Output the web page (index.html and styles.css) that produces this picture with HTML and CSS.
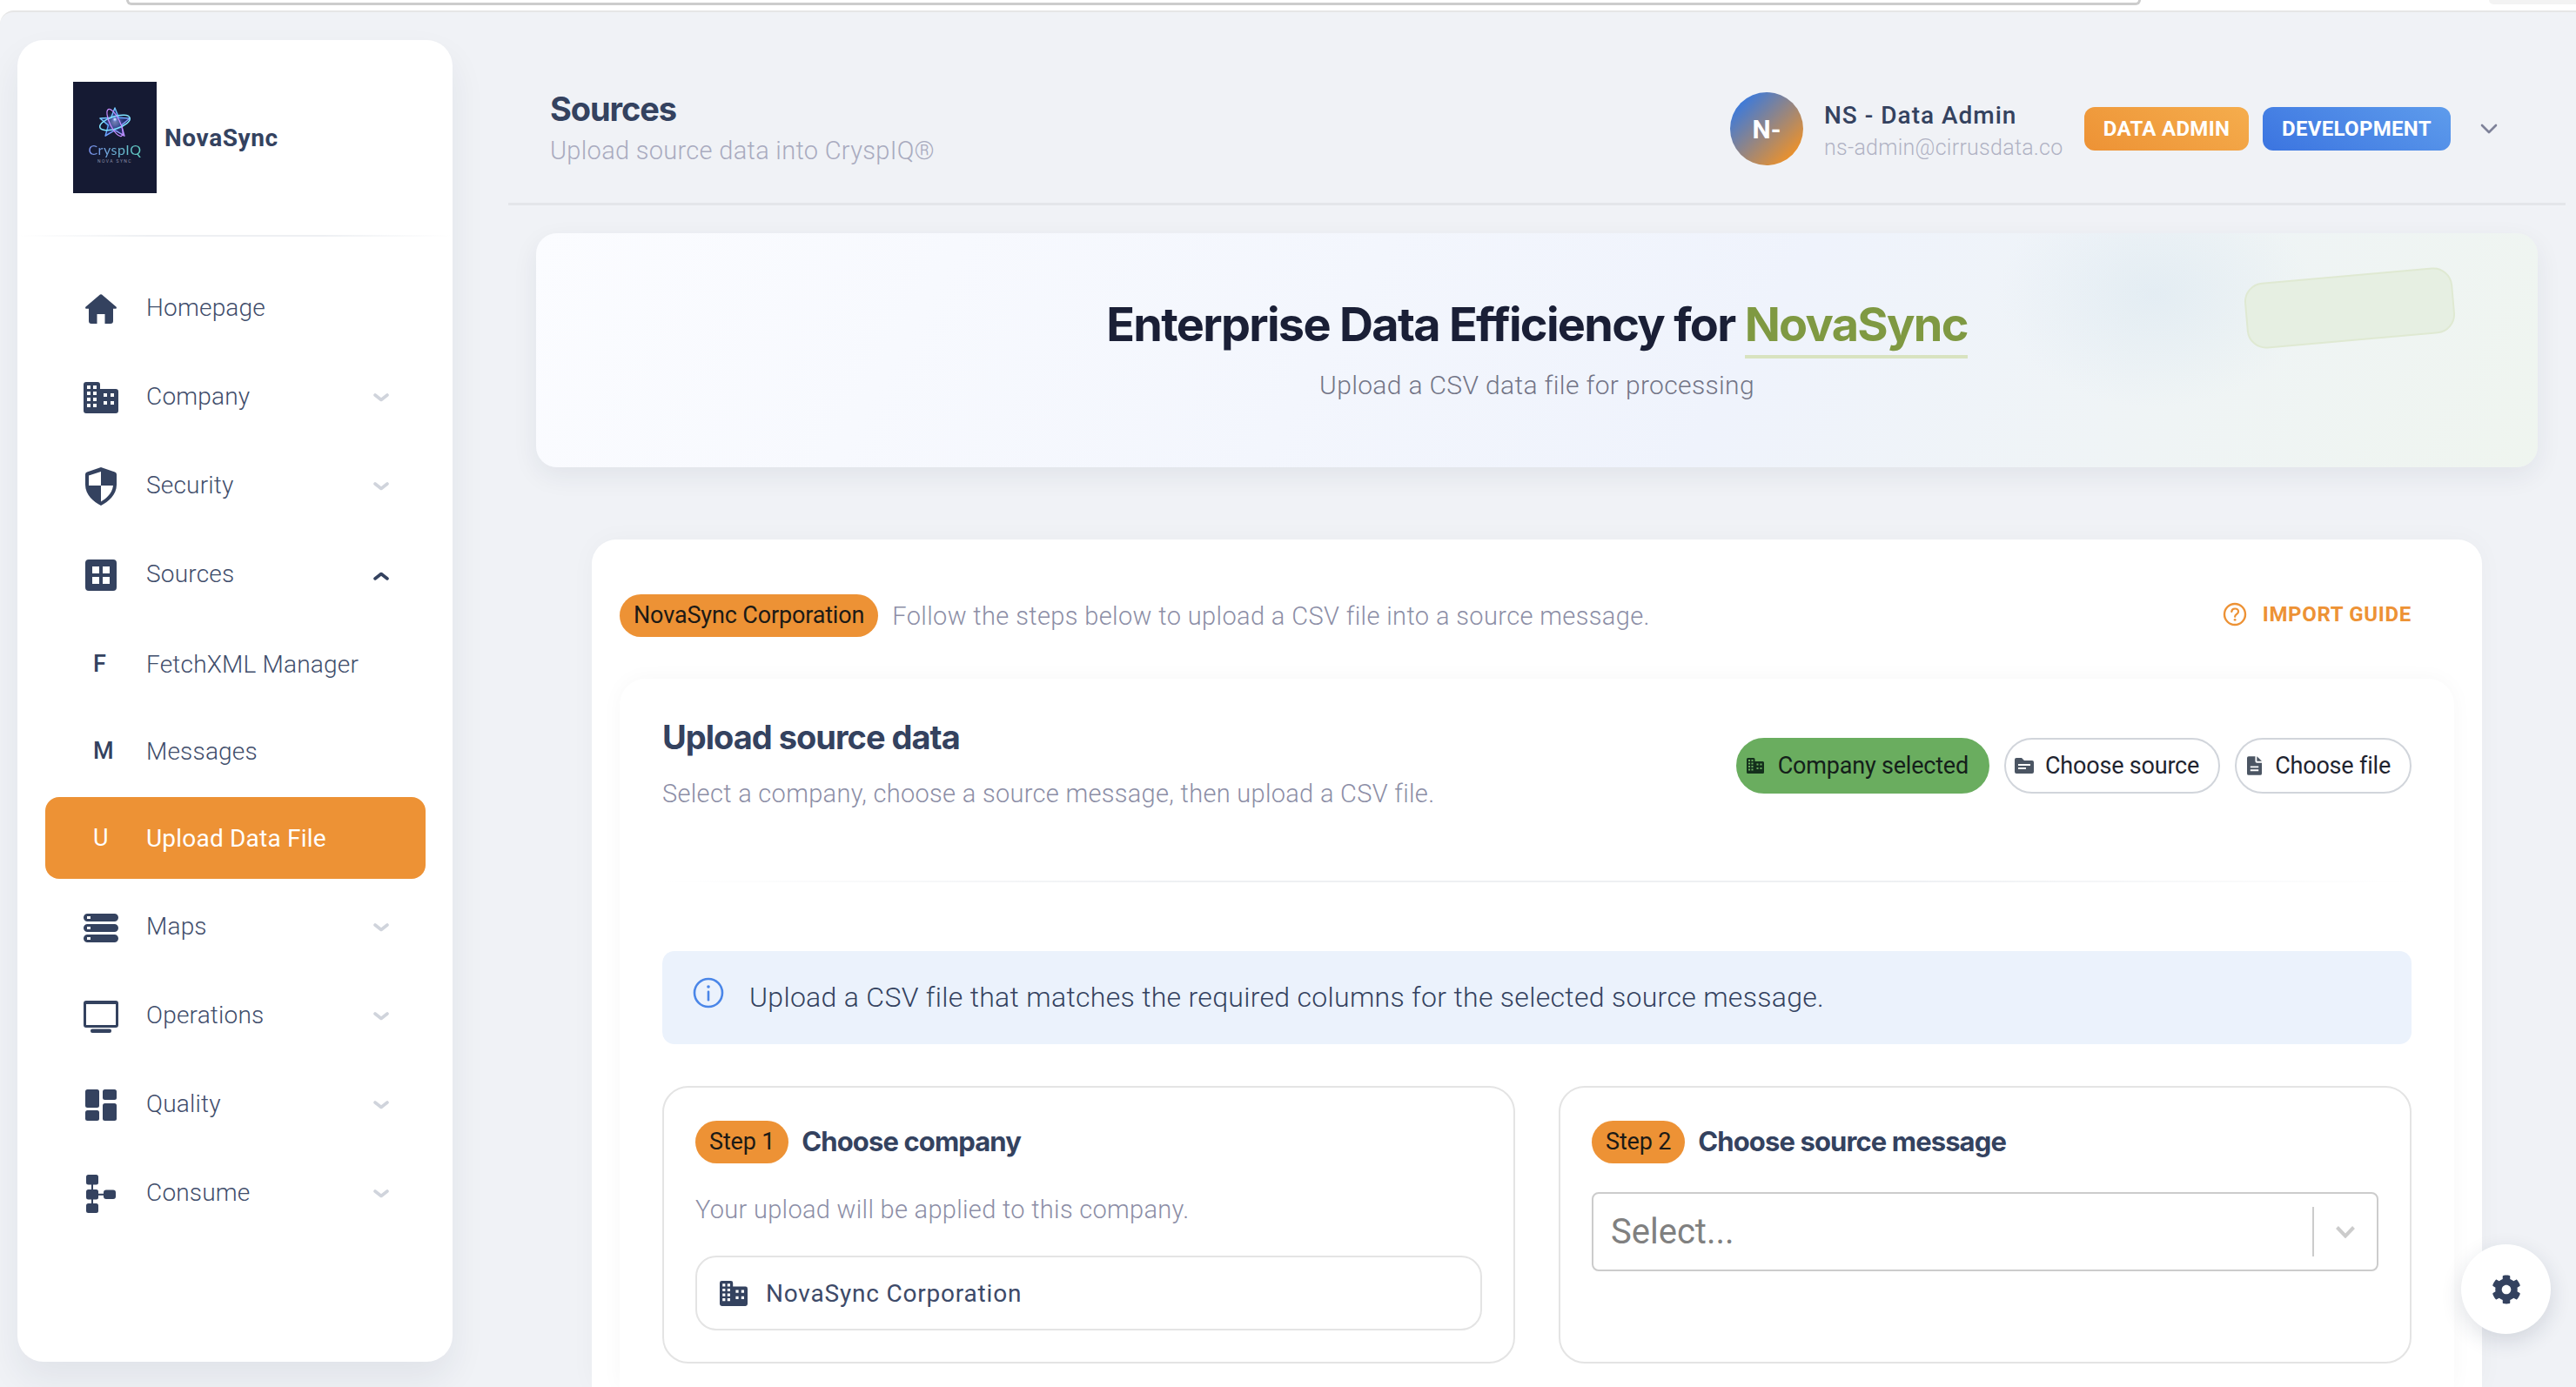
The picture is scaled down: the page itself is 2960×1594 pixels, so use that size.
FILE: index.html
```html
<!DOCTYPE html>
<html lang="en">

<head>
    <meta charset="UTF-8">
    <meta name="viewport" content="width=device-width, initial-scale=1.0">
    <title>Sources - Upload Data File</title>
    <link rel="stylesheet" href="styles.css">
</head>

<body>
    <svg class="defs" width="0" height="0">
        <defs>
            <linearGradient id="star_grad" x1="0" y1="0" x2="1" y2="1">
                <stop offset="0" stop-color="#8fe8ff"/>
                <stop offset="0.5" stop-color="#5aa8ff"/>
                <stop offset="1" stop-color="#d08bff"/>
            </linearGradient>
            <radialGradient id="star_glow">
                <stop offset="0" stop-color="#ffffff"/>
                <stop offset="0.35" stop-color="#b9d8ff" stop-opacity="0.8"/>
                <stop offset="1" stop-color="#4f6dff" stop-opacity="0"/>
            </radialGradient>
            <symbol id="i_home" viewBox="0 0 36 34">
                <path d="M17 .6a1.6 1.6 0 0 1 2 0l16.400 14c1 .9.5 2.200-.8 2.200H32V31a3 3 0 0 1-3 3h-6.500V23h-9v11H7a3 3 0 0 1-3-3V16.800H1.400c-1.300 0-1.800-1.300-.8-2.200z"/>
            </symbol>
            <symbol id="i_building" viewBox="0 0 40 36">
                <path fill-rule="evenodd" d="M3 0h13a3 3 0 0 1 3 3v5h18a3 3 0 0 1 3 3v22a3 3 0 0 1-3 3H3a3 3 0 0 1-3-3V3a3 3 0 0 1 3-3zM4 4v4h4V4zM11 4v4h4V4zM4 11v4h4v-4zM11 11v4h4v-4zM4 18v4h4v-4zM11 18v4h4v-4zM4 25v4h4v-4zM11 25v4h4v-4zM23 13v4h4v-4zM31 13v4h4v-4zM23 22v4h4v-4zM31 22v4h4v-4z"/>
            </symbol>
            <symbol id="i_shield" viewBox="0 0 36 44">
                <path fill-rule="evenodd" d="M18 0l16 5.500a3 3 0 0 1 2 2.800V20c0 12-10 20-18 24C10 40 0 32 0 20V8.300a3 3 0 0 1 2-2.800zM18 5L4 9.500V21h14zM18 21v18.500c6-3.500 13-9.500 14-18.500z"/>
            </symbol>
            <symbol id="i_grid" viewBox="0 0 36 36">
                <path fill-rule="evenodd" d="M4 0h28a4 4 0 0 1 4 4v28a4 4 0 0 1-4 4H4a4 4 0 0 1-4-4V4a4 4 0 0 1 4-4zM8 8v8h8V8zM20 8v8h8V8zM8 20v8h8v-8zM20 20v8h8v-8z"/>
            </symbol>
            <symbol id="i_server" viewBox="0 0 40 33">
                <path fill-rule="evenodd" d="M4.500 0h31a4.500 4.500 0 0 1 0 9h-31a4.500 4.500 0 0 1 0-9zM4 3v3h4V3zM4.500 12h31a4.500 4.500 0 0 1 0 9h-31a4.500 4.500 0 0 1 0-9zM4 15v3h4v-3zM4.500 24h31a4.500 4.500 0 0 1 0 9h-31a4.500 4.500 0 0 1 0-9zM4 27v3h4v-3z"/>
            </symbol>
            <symbol id="i_monitor" viewBox="0 0 40 37">
                <path fill-rule="evenodd" d="M3 0h34a3 3 0 0 1 3 3v25a3 3 0 0 1-3 3H3a3 3 0 0 1-3-3V3a3 3 0 0 1 3-3zM3 4v24h34V4zM10 32.500h20a2 2 0 0 1 2 2v.5a2 2 0 0 1-2 2H10a2 2 0 0 1-2-2v-.5a2 2 0 0 1 2-2z"/>
            </symbol>
            <symbol id="i_dash" viewBox="0 0 36 36">
                <rect width="16" height="21" rx="2.500"/>
                <rect y="24" width="16" height="12" rx="2.500"/>
                <rect x="20" width="16" height="12" rx="2.500"/>
                <rect x="20" y="16" width="16" height="20" rx="2.500"/>
            </symbol>
            <symbol id="i_tree" viewBox="0 0 34 44">
                <rect width="14" height="11.500" rx="2.500"/>
                <rect y="17" width="14" height="11.500" rx="2.500"/>
                <rect y="33" width="14" height="11" rx="2.500"/>
                <rect x="20" y="17.500" width="14" height="10.500" rx="3"/>
                <rect x="6" y="10" width="2" height="24"/>
                <rect x="13" y="21.800" width="8" height="2"/>
            </symbol>
            <symbol id="i_chevron" viewBox="0 0 18 11">
                <path d="M2 2l7 5.500L16 2" fill="none" stroke="currentColor" stroke-width="3.600" stroke-linecap="round" stroke-linejoin="round"/>
            </symbol>
        </defs>
    </svg>

    <div class="chrome">
        <div class="chrome-url"></div>
        <div class="chrome-tab"></div>
    </div>

    <div class="shell">
        <aside class="sidebar">
            <div class="brand">
                <div class="logo">
                    <svg class="logo-star" viewBox="0 0 40 40">
                        <circle cx="20" cy="19" r="13" fill="url(#star_glow)" opacity="0.55"/>
                        <path d="M20 2l4.600 12 13.400.8-10 8.200 3.500 13L20 29 8.500 36l3.500-13L2 14.800 15.400 14z" fill="#3a4fd8" fill-opacity="0.3" stroke="url(#star_grad)" stroke-width="1.500" stroke-linejoin="round"/>
                        <ellipse cx="20" cy="20" rx="19" ry="7.500" transform="rotate(-18 20 20)" fill="none" stroke="#7fe4ff" stroke-width="1.600"/>
                        <ellipse cx="20" cy="20" rx="18" ry="6" transform="rotate(64 20 20)" fill="none" stroke="#c88cff" stroke-width="1.300"/>
                        <circle cx="20" cy="16" r="3.500" fill="url(#star_glow)"/>
                    </svg>
                    <span class="logo-word">CryspIQ</span>
                    <span class="logo-sub">NOVA SYNC</span>
                </div>
                <span class="brand-name">NovaSync</span>
            </div>
            <div class="fade-rule"></div>

            <nav class="nav">
                <a class="nav-item"><svg class="nav-icon icon-home"><use href="#i_home"/></svg><span class="nav-text">Homepage</span></a>
                <a class="nav-item"><svg class="nav-icon icon-building"><use href="#i_building"/></svg><span class="nav-text">Company</span><svg class="nav-chevron"><use href="#i_chevron"/></svg></a>
                <a class="nav-item"><svg class="nav-icon icon-shield"><use href="#i_shield"/></svg><span class="nav-text">Security</span><svg class="nav-chevron"><use href="#i_chevron"/></svg></a>
                <a class="nav-item"><svg class="nav-icon icon-grid"><use href="#i_grid"/></svg><span class="nav-text">Sources</span><svg class="nav-chevron open"><use href="#i_chevron"/></svg></a>
                <div class="nav-sub">
                    <a class="nav-item sub"><span class="nav-letter">F</span><span class="nav-text">FetchXML Manager</span></a>
                    <a class="nav-item sub"><span class="nav-letter">M</span><span class="nav-text">Messages</span></a>
                    <a class="nav-item sub active"><span class="nav-letter">U</span><span class="nav-text">Upload Data File</span></a>
                </div>
                <a class="nav-item"><svg class="nav-icon icon-server"><use href="#i_server"/></svg><span class="nav-text">Maps</span><svg class="nav-chevron"><use href="#i_chevron"/></svg></a>
                <a class="nav-item"><svg class="nav-icon icon-monitor"><use href="#i_monitor"/></svg><span class="nav-text">Operations</span><svg class="nav-chevron"><use href="#i_chevron"/></svg></a>
                <a class="nav-item"><svg class="nav-icon icon-dash"><use href="#i_dash"/></svg><span class="nav-text">Quality</span><svg class="nav-chevron"><use href="#i_chevron"/></svg></a>
                <a class="nav-item"><svg class="nav-icon icon-tree"><use href="#i_tree"/></svg><span class="nav-text">Consume</span><svg class="nav-chevron"><use href="#i_chevron"/></svg></a>
            </nav>
        </aside>

        <main class="main">
            <header class="topbar">
                <div class="page-title">
                    <h1>Sources</h1>
                    <p>Upload source data into CryspIQ®</p>
                </div>
                <div class="user">
                    <div class="avatar">N-</div>
                    <div class="user-info">
                        <div class="user-name">NS - Data Admin</div>
                        <div class="user-mail">ns-admin@cirrusdata.co</div>
                    </div>
                    <span class="tag tag-orange">DATA ADMIN</span>
                    <span class="tag tag-blue">DEVELOPMENT</span>
                    <svg class="user-chevron" viewBox="0 0 20 12"><path d="M2 2l8 8 8-8" fill="none" stroke="currentColor" stroke-width="2.600" stroke-linecap="round" stroke-linejoin="round"/></svg>
                </div>
            </header>

            <section class="hero">
                <div class="hero-shape"></div>
                <h2>Enterprise Data Efficiency for <span class="hero-name">NovaSync</span></h2>
                <p>Upload a CSV data file for processing</p>
            </section>

            <section class="panel">
                <div class="panel-head">
                    <span class="pill-orange">NovaSync Corporation</span>
                    <span class="panel-note">Follow the steps below to upload a CSV file into a source message.</span>
                    <a class="guide">
                        <svg class="guide-icon" viewBox="0 0 28 28">
                            <circle cx="14" cy="14" r="12" fill="none" stroke="currentColor" stroke-width="2.400"/>
                            <path d="M10.200 11c.3-2.300 2-3.500 3.900-3.500 2.200 0 3.900 1.400 3.900 3.400 0 3-3.900 3.100-3.900 5.900" fill="none" stroke="currentColor" stroke-width="2.200" stroke-linecap="round"/>
                            <circle cx="14.100" cy="20.300" r="1.400" fill="currentColor"/>
                        </svg>
                        IMPORT GUIDE
                    </a>
                </div>

                <div class="upload">
                    <div class="upload-head">
                        <div>
                            <h3>Upload source data</h3>
                            <p>Select a company, choose a source message, then upload a CSV file.</p>
                        </div>
                        <div class="stages">
                            <span class="stage done"><svg class="stage-icon building"><use href="#i_building"/></svg>Company selected</span>
                            <span class="stage">
                                <svg class="stage-icon folder" viewBox="0 0 22 18"><path fill-rule="evenodd" d="M2 0h6l3 3h9a2 2 0 0 1 2 2v11a2 2 0 0 1-2 2H2a2 2 0 0 1-2-2V2a2 2 0 0 1 2-2zM4 7v2h14V7zM4 11v2h9v-2z"/></svg>Choose source
                            </span>
                            <span class="stage">
                                <svg class="stage-icon file" viewBox="0 0 18 23"><path fill-rule="evenodd" d="M2 0h8v6a2 2 0 0 0 2 2h6v13a2 2 0 0 1-2 2H2a2 2 0 0 1-2-2V2a2 2 0 0 1 2-2zM12 0l6 6h-6zM4 12v2h10v-2zM4 16v2h10v-2z"/></svg>Choose file
                            </span>
                        </div>
                    </div>
                    <div class="fade-rule"></div>

                    <div class="notice">
                        <svg class="notice-icon" viewBox="0 0 36 36">
                            <circle cx="18" cy="18" r="16" fill="none" stroke="currentColor" stroke-width="2.600"/>
                            <circle cx="18" cy="11" r="1.800" fill="currentColor"/>
                            <rect x="16.700" y="15.500" width="2.600" height="12" rx="1.300" fill="currentColor"/>
                        </svg>
                        <span>Upload a CSV file that matches the required columns for the selected source message.</span>
                    </div>

                    <div class="steps">
                        <div class="step">
                            <div class="step-head"><span class="pill-orange step-no">Step 1</span><h4>Choose company</h4></div>
                            <p class="step-note">Your upload will be applied to this company.</p>
                            <div class="company-box"><svg class="company-icon"><use href="#i_building"/></svg>NovaSync Corporation</div>
                        </div>
                        <div class="step">
                            <div class="step-head"><span class="pill-orange step-no">Step 2</span><h4>Choose source message</h4></div>
                            <div class="select">
                                <span class="select-text">Select...</span>
                                <span class="select-sep"></span>
                                <svg class="select-arrow" viewBox="0 0 24 14"><path d="M2.500 1.500l9.500 10 9.500-10" fill="none" stroke="currentColor" stroke-width="4"/></svg>
                            </div>
                        </div>
                    </div>
                </div>
            </section>
        </main>
    </div>

    <button class="fab">
        <svg viewBox="0 0 512 512"><path d="M487.400 315.700l-42.600-24.600c4.300-23.200 4.300-47 0-70.200l42.600-24.600c4.900-2.800 7.100-8.600 5.500-14-11.100-35.600-30-67.800-54.700-94.600-3.800-4.100-10-5.100-14.800-2.300L380.800 110c-17.900-15.400-38.500-27.300-60.800-35.100V25.800c0-5.600-3.900-10.500-9.400-11.700-36.700-8.200-74.300-7.800-109.200 0-5.500 1.200-9.400 6.100-9.400 11.700V75c-22.200 7.900-42.800 19.800-60.800 35.100L88.700 85.500c-4.900-2.800-11-1.900-14.800 2.300-24.700 26.700-43.600 58.900-54.700 94.600-1.700 5.400.6 11.200 5.500 14L67.300 221c-4.300 23.200-4.300 47 0 70.200l-42.600 24.600c-4.900 2.800-7.100 8.600-5.500 14 11.100 35.600 30 67.800 54.700 94.600 3.800 4.100 10 5.100 14.800 2.300l42.600-24.600c17.900 15.400 38.500 27.300 60.800 35.100v49.200c0 5.600 3.900 10.500 9.400 11.700 36.700 8.200 74.300 7.800 109.200 0 5.500-1.200 9.400-6.100 9.400-11.700v-49.200c22.200-7.900 42.800-19.800 60.800-35.100l42.600 24.600c4.900 2.800 11 1.900 14.800-2.300 24.700-26.700 43.600-58.900 54.700-94.600 1.500-5.500-.7-11.300-5.600-14.100zM256 336c-44.100 0-80-35.900-80-80s35.900-80 80-80 80 35.900 80 80-35.900 80-80 80z"/></svg>
    </button>
</body>

</html>
```

FILE: styles.css
```css
html,
body {
    height: 100%;
    margin: 0;
    overflow: hidden;
}

body {
    font-family: Roboto, 'Liberation Sans', sans-serif;
    background: #ffffff;
    color: #34425f;
    display: flex;
    flex-direction: column;
}

h1,
h2,
h3,
h4,
p {
    margin: 0;
}

.defs {
    position: absolute;
}

.chrome {
    display: flex;
    justify-content: space-between;
    height: 12px;
    flex: none;
}

.chrome-url {
    width: 2309px;
    height: 3px;
    margin-left: 145px;
    border: 3px solid #cccccc;
    border-top: 0;
    border-radius: 0 0 20px 20px;
}

.chrome-tab {
    width: 100px;
    height: 5px;
    background: #f3f3f3;
    border-radius: 0 0 0 10px;
}

.shell {
    flex: 1;
    display: flex;
    min-height: 0;
    overflow: hidden;
    padding: 32px 0 0 20px;
    background: #f0f2f6;
    border-top: 2px solid #e6e6e6;
    border-radius: 16px 0 0 0;
}

/* sidebar */

.sidebar {
    flex: none;
    width: 500px;
    height: 1519px;
    background: #ffffff;
    border-radius: 30px;
    box-shadow: 0 20px 40px rgba(30, 40, 70, 0.07);
}

.brand {
    display: flex;
    align-items: center;
    gap: 9px;
    padding: 48px 0 48px 64px;
}

.logo {
    width: 96px;
    height: 128px;
    background: #151a33;
    display: flex;
    flex-direction: column;
    align-items: center;
    padding-top: 28px;
    box-sizing: border-box;
}

.logo-star {
    width: 38px;
    height: 38px;
}

.logo-word {
    font-family: Lato, sans-serif;
    font-size: 16px;
    line-height: 18px;
    margin-top: 3px;
    letter-spacing: 0.5px;
    background: linear-gradient(90deg, #7a8fec, #5fd0c0);
    -webkit-background-clip: text;
    background-clip: text;
    color: transparent;
}

.logo-sub {
    font-size: 5px;
    line-height: 8px;
    letter-spacing: 1.4px;
    color: #8b90a8;
}

.brand-name {
    font-size: 28px;
    font-weight: 700;
    letter-spacing: 0.6px;
    color: #34425f;
}

.fade-rule {
    height: 2px;
    background: linear-gradient(90deg, rgba(236, 238, 242, 0), #eef0f3 30%, #eef0f3 70%, rgba(236, 238, 242, 0));
}

.nav {
    display: flex;
    flex-direction: column;
    padding: 32px 31px 0 32px;
}

.nav-item {
    display: flex;
    align-items: center;
    height: 102px;
    padding: 0 42px 0 44px;
    border-radius: 16px;
    font-size: 28px;
    font-weight: 300;
    letter-spacing: 0.2px;
    color: #3f4d6b;
}

.nav-icon {
    width: 40px;
    fill: #34425f;
    flex: none;
}

.icon-home { height: 34px; }
.icon-building { height: 36px; }
.icon-shield { height: 44px; }
.icon-grid { height: 36px; }
.icon-server { height: 33px; }
.icon-monitor { height: 37px; }
.icon-dash { height: 36px; }
.icon-tree { height: 44px; }

.nav-text {
    margin: 0 0 3px 32px;
    flex: 1;
}

.nav-chevron {
    width: 18px;
    height: 11px;
    color: #d0d4dc;
}

.nav-chevron.open {
    color: #34425f;
    transform: rotate(180deg);
}

.nav-sub {
    display: flex;
    flex-direction: column;
    gap: 6px;
    padding: 4px 0 5px;
}

.nav-item.sub {
    height: 94px;
}

.nav-item.sub .nav-text {
    margin-bottom: 0;
}

.nav-letter {
    width: 40px;
    padding-left: 11px;
    box-sizing: border-box;
    font-size: 27px;
    font-weight: 500;
    color: #34425f;
    flex: none;
}

.nav-item.active {
    background: #ed9235;
    color: #ffffff;
    font-weight: 400;
    letter-spacing: 0.2px;
}

.nav-item.active .nav-letter {
    color: #ffffff;
    font-weight: 400;
}

/* main column */

.main {
    flex: 1;
    min-width: 0;
    display: flex;
    flex-direction: column;
    padding: 0 12px 0 64px;
}

.topbar {
    display: flex;
    justify-content: space-between;
    align-items: center;
    flex: none;
    height: 190px;
    padding: 17px 78px 0 48px;
    border-bottom: 3px solid #e4e6ea;
    box-sizing: border-box;
}

.page-title {
    padding-bottom: 3px;
}

.page-title h1 {
    font-family: Inter, sans-serif;
    font-size: 38px;
    line-height: 44px;
    font-weight: 700;
    letter-spacing: -1.1px;
    color: #34425f;
}

.page-title p {
    font-size: 29px;
    line-height: 36px;
    margin-top: 8px;
    letter-spacing: 0.3px;
    font-weight: 300;
    color: #a9abbf;
}

.user {
    display: flex;
    align-items: center;
}

.avatar {
    width: 84px;
    height: 84px;
    border-radius: 50%;
    background: linear-gradient(135deg, #3f7ad8 15%, #e8912f 85%);
    color: #ffffff;
    font-weight: 700;
    font-size: 30px;
    display: flex;
    align-items: center;
    justify-content: center;
}

.user-info {
    margin-left: 24px;
    width: 299px;
    padding-top: 6px;
}

.user-name {
    font-size: 28px;
    font-weight: 500;
    line-height: 34px;
    letter-spacing: 1px;
    color: #34425f;
}

.user-mail {
    font-size: 25px;
    font-weight: 300;
    line-height: 32px;
    letter-spacing: 0.27px;
    margin-top: 4px;
    color: #b0b2c4;
}

.tag {
    height: 50px;
    line-height: 50px;
    border-radius: 12px;
    color: #ffffff;
    font-size: 24px;
    font-weight: 700;
    letter-spacing: 0.3px;
    text-align: center;
}

.tag-orange {
    width: 189px;
    background: linear-gradient(30deg, #ed9235, #f5ad4d);
}

.tag-blue {
    width: 216px;
    margin-left: 16px;
    background: linear-gradient(30deg, #3b74e0, #5e9cec);
}

.user-chevron {
    width: 20px;
    height: 12px;
    margin-left: 34px;
    color: #7e8299;
}

.hero {
    position: relative;
    flex: none;
    height: 269px;
    margin: 32px 32px 0;
    padding-top: 70px;
    box-sizing: border-box;
    text-align: center;
    border-radius: 24px;
    background:
        radial-gradient(ellipse 180px 130px at 1860px 70px, rgba(218, 231, 240, 0.55), rgba(218, 231, 240, 0)),
        linear-gradient(120deg, #fbfcff 0%, #eff3fc 60%, #eff5ef 100%);
    box-shadow: 0 10px 30px rgba(30, 40, 70, 0.07);
    overflow: hidden;
}

.hero h2 {
    font-family: Inter, sans-serif;
    font-size: 54px;
    line-height: 66px;
    font-weight: 700;
    letter-spacing: -1.700px;
    color: #1a1f36;
}

.hero-name {
    display: inline-block;
    color: #7f9942;
    border-bottom: 4px solid #d8e3c0;
    line-height: 70px;
}

.hero p {
    font-size: 30px;
    line-height: 38px;
    margin-top: 12px;
    font-weight: 300;
    letter-spacing: 0.34px;
    color: #737587;
}

.hero-shape {
    position: absolute;
    left: 1964px;
    top: 48px;
    width: 236px;
    height: 72px;
    background: #e6efe2;
    border: 2px solid #dfe9d2;
    border-radius: 22px;
    transform: rotate(-5deg);
}

.panel {
    flex: 1;
    margin: 83px 96px 0;
    padding: 63px 32px 0;
    background: #ffffff;
    border-radius: 28px 28px 0 0;
    box-shadow: 0 0 30px rgba(30, 40, 70, 0.03);
}

.panel-head {
    display: flex;
    align-items: center;
    height: 49px;
}

.pill-orange {
    display: inline-block;
    background: #ed9235;
    color: #1c1a16;
    font-size: 27px;
    letter-spacing: -0.15px;
    line-height: 49px;
    height: 49px;
    padding: 0 16px;
    border-radius: 25px;
    white-space: nowrap;
}

.panel-note {
    margin-left: 16px;
    font-size: 29px;
    font-weight: 300;
    letter-spacing: 0.37px;
    color: #8c8ea6;
    flex: 1;
}

.guide {
    display: flex;
    align-items: center;
    gap: 18px;
    margin: -3px 49px 0 0;
    font-size: 24px;
    font-weight: 700;
    letter-spacing: 0.67px;
    color: #ed9235;
}

.guide-icon {
    width: 28px;
    height: 28px;
}

.upload {
    margin-top: 48px;
    padding: 43px 49px 0;
    height: 814px;
    box-sizing: border-box;
    background: #ffffff;
    border-radius: 30px 30px 0 0;
    box-shadow: 0 0 24px rgba(30, 40, 70, 0.035);
}

.upload-head {
    display: flex;
    justify-content: space-between;
    align-items: flex-start;
    height: 189px;
}

.upload-head h3 {
    font-family: Inter, sans-serif;
    font-size: 38px;
    line-height: 48px;
    font-weight: 700;
    letter-spacing: -1px;
    color: #34425f;
}

.upload-head p {
    font-size: 29px;
    line-height: 38px;
    margin-top: 22px;
    font-weight: 300;
    letter-spacing: 0.3px;
    color: #8c8ea6;
}

.stages {
    display: flex;
    gap: 17px;
    margin-top: 25px;
}

.stage {
    display: flex;
    align-items: center;
    height: 64px;
    padding: 0 22px 0 10px;
    box-sizing: border-box;
    border: 2px solid #d1d5db;
    border-radius: 32px;
    font-size: 27px;
    letter-spacing: -0.2px;
    color: #1f2430;
}

.stage.done {
    background: #6aad5f;
    border-color: #6aad5f;
    color: #14201a;
}

.stage-icon {
    fill: #4b5563;
    flex: none;
}

.stage-icon.building {
    width: 20px;
    height: 20px;
    margin-right: 16px;
    fill: #14301c;
}

.stage-icon.folder {
    width: 22px;
    height: 18px;
    margin-right: 13px;
}

.stage-icon.file {
    width: 17px;
    height: 22px;
    margin: 0 15px 0 2px;
}

.notice {
    display: flex;
    align-items: center;
    gap: 29px;
    height: 107px;
    box-sizing: border-box;
    margin-top: 79px;
    padding: 0 35px 2px;
    background: #ebf2fc;
    border-radius: 14px;
    font-size: 32px;
    font-weight: 300;
    letter-spacing: 0.3px;
    color: #34425f;
}

.notice-icon {
    width: 36px;
    height: 36px;
    margin-top: -10px;
    color: #4a86e8;
    flex: none;
}

.steps {
    display: grid;
    grid-template-columns: 1fr 1fr;
    gap: 50px;
    margin-top: 48px;
}

.step {
    height: 319px;
    padding: 38px 36px 0;
    box-sizing: border-box;
    border: 2px solid #e4e4e4;
    border-radius: 30px;
}

.step-head {
    display: flex;
    align-items: center;
    gap: 15px;
}

.step-no {
    padding: 0 16px;
}

.step-head h4 {
    font-family: Inter, sans-serif;
    font-size: 31px;
    font-weight: 700;
    letter-spacing: -0.9px;
    margin-bottom: 3px;
    color: #34425f;
}

.step-note {
    margin-top: 35px;
    font-size: 29px;
    line-height: 36px;
    font-weight: 300;
    letter-spacing: 0.3px;
    color: #8c8ea6;
}

.company-box {
    display: flex;
    align-items: center;
    gap: 21px;
    height: 86px;
    margin-top: 35px;
    padding: 0 26px;
    box-sizing: border-box;
    border: 2px solid #e4e4e4;
    border-radius: 24px;
    font-size: 28px;
    letter-spacing: 0.8px;
    color: #3d4a68;
}

.company-icon {
    width: 32px;
    height: 29px;
    fill: #34425f;
}

.select {
    display: flex;
    align-items: center;
    height: 91px;
    margin-top: 33px;
    box-sizing: border-box;
    border: 2px solid #cccccc;
    border-radius: 8px;
    padding: 0 0 0 20px;
}

.select-text {
    flex: 1;
    font-size: 40px;
    color: #808080;
}

.select-sep {
    width: 2px;
    height: 57px;
    background: #cccccc;
}

.select-arrow {
    width: 24px;
    height: 14px;
    margin: 0 24px;
    color: #cccccc;
}

.fab {
    position: absolute;
    left: 2828px;
    top: 1430px;
    width: 103px;
    height: 103px;
    padding: 0;
    border: 0;
    border-radius: 50%;
    background: #ffffff;
    box-shadow: 0 8px 24px rgba(30, 40, 70, 0.14);
    display: flex;
    align-items: center;
    justify-content: center;
}

.fab svg {
    width: 34px;
    height: 34px;
    fill: #34425f;
}
```
